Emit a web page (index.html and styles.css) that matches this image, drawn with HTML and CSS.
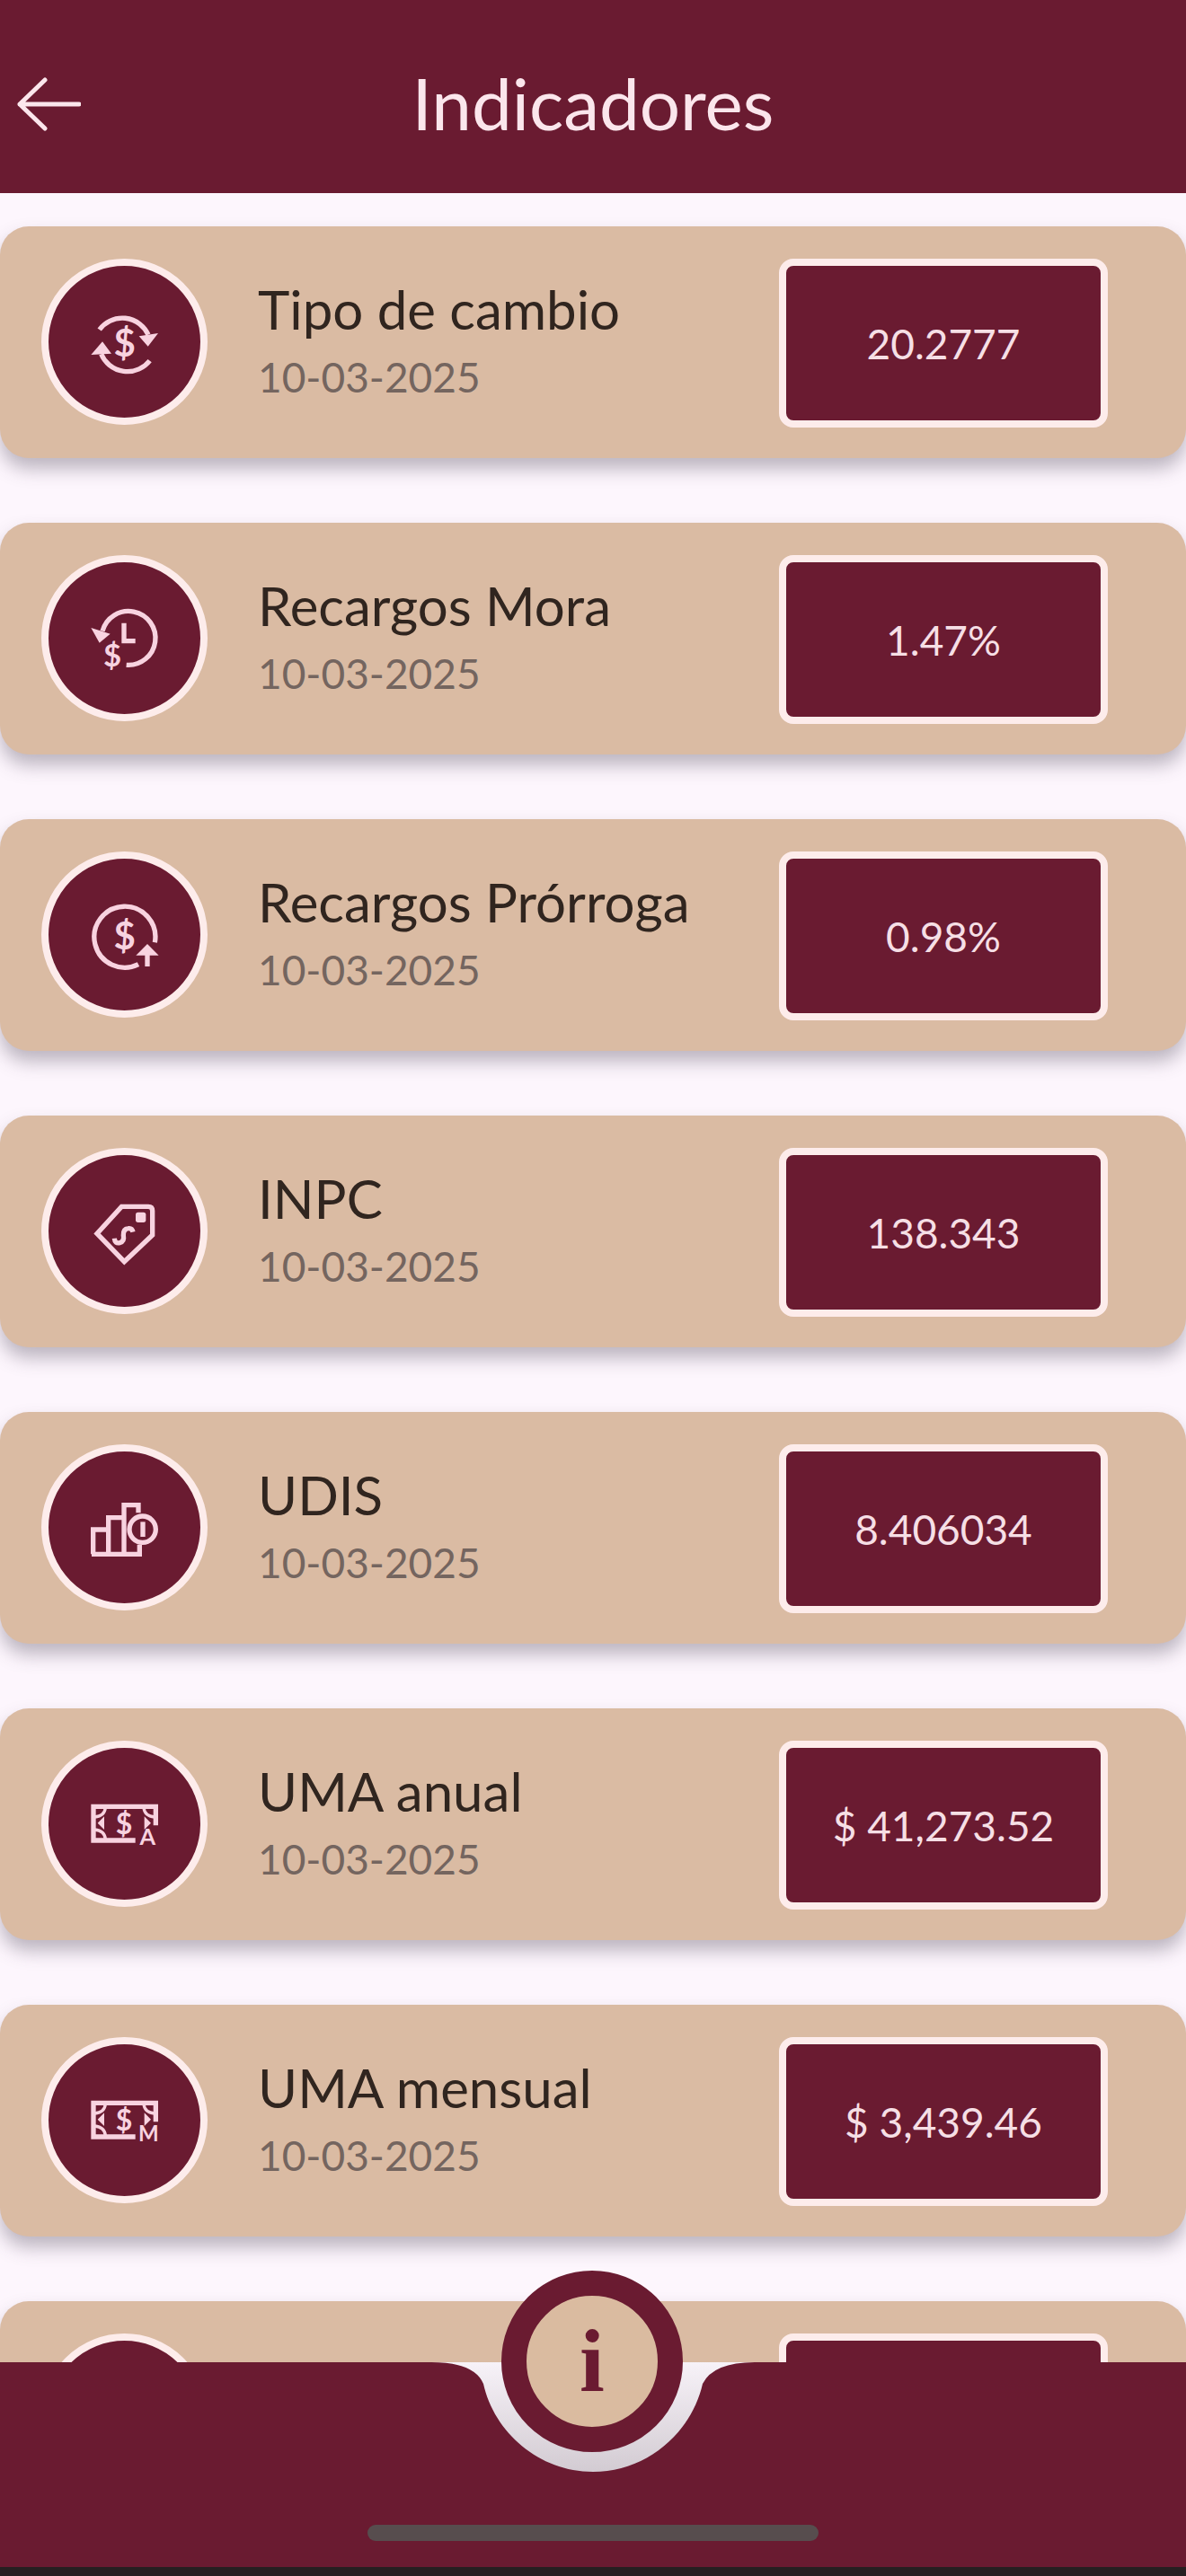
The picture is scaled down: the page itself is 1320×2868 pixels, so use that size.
FILE: index.html
```
<!DOCTYPE html>
<html lang="es">
<head>
    <meta charset="UTF-8">
    <meta name="viewport" content="width=device-width, initial-scale=1.0">
    <title>Indicadores</title>
    <link rel="stylesheet" href="styles.css">
</head>
<body>
    <header class="header">
        <button class="back" type="button" aria-label="Regresar">
            <svg viewBox="0 0 72 60"><path d="M70 30H4M32 3L4 30L32 57"/></svg>
        </button>
        <h1 class="title">Indicadores</h1>
    </header>

    <main class="content">
        <ul class="list">
            <li class="card">
                <div class="icon">
                    <svg viewBox="177 180 240 240">
                        <path d="M212 258A95 95 0 0 1 375 275M380 362A95 95 0 0 1 218 340"/>
                        <path class="solid" d="M344 280L408 270L374 314ZM184 342L222 298L252 338Z"/>
                        <text class="bold" x="296" y="348" font-size="126">$</text>
                    </svg>
                </div>
                <div class="info">
                    <h2 class="name">Tipo de cambio</h2>
                    <p class="date">10-03-2025</p>
                </div>
                <div class="value">20.2777</div>
            </li>
            <li class="card">
                <div class="icon">
                    <svg viewBox="177 180 240 240">
                        <path d="M222 275A90 90 0 1 1 302 388M294 248V308H332"/>
                        <path class="solid" d="M184 264L248 284L212 314Z"/>
                        <text class="bold" x="255" y="394" font-size="104">$</text>
                    </svg>
                </div>
                <div class="info">
                    <h2 class="name">Recargos Mora</h2>
                    <p class="date">10-03-2025</p>
                </div>
                <div class="value">1.47%</div>
            </li>
            <li class="card">
                <div class="icon">
                    <svg viewBox="177 180 240 240">
                        <path d="M397 325A102 102 0 1 0 342 398M372 405V350"/>
                        <path class="solid" d="M334 368L372 330L410 368Z"/>
                        <text class="bold" x="296" y="348" font-size="126">$</text>
                    </svg>
                </div>
                <div class="info">
                    <h2 class="name">Recargos Prórroga</h2>
                    <p class="date">10-03-2025</p>
                </div>
                <div class="value">0.98%</div>
            </li>
            <li class="card">
                <div class="icon">
                    <svg viewBox="177 180 240 240">
                        <path d="M286 217H375Q389 217 389 231V312L295 401L204 307Z"/>
                        <rect class="solid" x="333" y="236" width="34" height="34" rx="8"/>
                        <path d="M262 323Q264 342 280 338Q296 334 292 313Q291 292 308 290Q321 288 324 302"/>
                    </svg>
                </div>
                <div class="info">
                    <h2 class="name">INPC</h2>
                    <p class="date">10-03-2025</p>
                </div>
                <div class="value">138.343</div>
            </li>
            <li class="card">
                <div class="icon">
                    <svg viewBox="177 180 240 240">
                        <path d="M191 388V306H242V388M242 306V266H294V388M294 266V224H342V250M186 388H346V356"/>
                        <circle cx="356" cy="305" r="44"/>
                        <path d="M357 280V330"/>
                    </svg>
                </div>
                <div class="info">
                    <h2 class="name">UDIS</h2>
                    <p class="date">10-03-2025</p>
                </div>
                <div class="value">8.406034</div>
            </li>
            <li class="card">
                <div class="icon">
                    <svg viewBox="177 180 240 240">
                        <path d="M332 354H192V241H400V304"/>
                        <path class="thin" d="M232 244Q230 272 196 276M196 318Q230 322 232 350M360 244Q362 272 396 276"/>
                        <path class="solid" d="M206 296L228 274V318ZM384 296L362 274V318Z"/>
                        <text class="bold" x="294" y="332" font-size="96">$</text>
                        <text class="bold" x="373" y="368" font-size="76">A</text>
                    </svg>
                </div>
                <div class="info">
                    <h2 class="name">UMA anual</h2>
                    <p class="date">10-03-2025</p>
                </div>
                <div class="value">$ 41,273.52</div>
            </li>
            <li class="card">
                <div class="icon">
                    <svg viewBox="177 180 240 240">
                        <path d="M332 354H192V241H400V304"/>
                        <path class="thin" d="M232 244Q230 272 196 276M196 318Q230 322 232 350M360 244Q362 272 396 276"/>
                        <path class="solid" d="M206 296L228 274V318ZM384 296L362 274V318Z"/>
                        <text class="bold" x="294" y="332" font-size="96">$</text>
                        <text class="bold" x="376" y="368" font-size="72">M</text>
                    </svg>
                </div>
                <div class="info">
                    <h2 class="name">UMA mensual</h2>
                    <p class="date">10-03-2025</p>
                </div>
                <div class="value">$ 3,439.46</div>
            </li>
            <li class="card">
                <div class="icon"></div>
                <div class="info"></div>
                <div class="value"></div>
            </li>
        </ul>
    </main>

    <nav class="navbar">
        <div class="side"></div>
        <!-- notch around the info button -->
        <svg class="notch" viewBox="0 0 360 228">
            <path d="M0 0Q48 0 58 24C70 78 120 122 180 122C240 122 290 78 302 24Q314 0 360 0V228H0Z"/>
        </svg>
        <div class="side"></div>
        <button class="fab" type="button" aria-label="Información">i</button>
        <div class="home"></div>
    </nav>
</body>
</html>
```
FILE: styles.css
```
* {
    box-sizing: border-box;
}
body {
    margin: 0;
    height: 100vh;
    display: flex;
    flex-direction: column;
    background-color: #fdf6fd;
    font-family: Lato, sans-serif;
}
h1, h2, p, ul {
    margin: 0;
    padding: 0;
    font-weight: 400;
}
button {
    border: none;
    padding: 0;
    cursor: pointer;
}

.header {
    display: grid;
    grid-template-columns: 72px 1fr 72px;
    align-items: center;
    padding: 64px 18px 47px;
    background-color: #6a1b31;
    color: #fbe6ec;
}
.back {
    background: none;
    height: 60px;
}
.back svg {
    display: block;
    width: 72px;
    height: 60px;
    fill: none;
    stroke: #fbe6ec;
    stroke-width: 5;
    stroke-linecap: round;
    stroke-linejoin: round;
}
.title {
    padding-bottom: 4px;
    font-size: 80px;
    line-height: 100px;
    text-align: center;
}

.content {
    flex: 1;
    min-height: 0;
    overflow: hidden;
    padding-top: 37px;
}
.list {
    display: flex;
    flex-direction: column;
    gap: 72px;
    list-style: none;
}
.card {
    display: grid;
    grid-template-columns: 185px 1fr 366px;
    column-gap: 56px;
    height: 258px;
    padding: 36px 87px 0 46px;
    border-radius: 32px;
    background-color: #dabba3;
    box-shadow: 0 12px 20px rgba(70, 60, 80, 0.35);
}
.icon {
    display: flex;
    justify-content: center;
    align-items: center;
    height: 185px;
    border: 8px solid #fdeceb;
    border-radius: 50%;
    background-color: #6a1b31;
}
.icon svg {
    width: 80px;
    height: 80px;
    fill: none;
    stroke: #f8d3e0;
    stroke-width: 16;
}
.icon .thin {
    stroke-width: 10;
}
.icon .solid,
.icon text {
    fill: #f8d3e0;
    stroke: none;
}
.icon text {
    text-anchor: middle;
}
.icon .bold {
    font-weight: 700;
}
.info {
    padding-top: 18px;
    white-space: nowrap;
}
.name {
    color: #30251f;
    font-size: 60px;
    line-height: 76px;
}
.date {
    color: #74655f;
    font-size: 46px;
    line-height: 76px;
}
.value {
    display: flex;
    justify-content: center;
    align-items: center;
    height: 188px;
    border: 8px solid #fdeceb;
    border-radius: 16px;
    background-color: #6a1b31;
    color: #f6dfe5;
    font-size: 46px;
}

.navbar {
    position: relative;
    display: grid;
    grid-template-columns: 1fr 360px 1fr;
    border-bottom: 10px solid #261f21;
}
.side {
    background-color: #6a1b31;
}
.notch {
    display: block;
    width: 360px;
    height: 228px;
    fill: #6a1b31;
    background: linear-gradient(#f7f2f8, #d3ccd3 120px);
}
.fab {
    position: absolute;
    top: -102px;
    left: 50%;
    width: 202px;
    height: 202px;
    margin-left: -102px;
    border: 28px solid #6a1b31;
    border-radius: 50%;
    background-color: #dabba0;
    color: #6a1b31;
    font-family: "Liberation Serif", serif;
    font-size: 100px;
    font-weight: 700;
    line-height: 140px;
}
.home {
    position: absolute;
    bottom: 29px;
    left: 31%;
    right: 31%;
    height: 18px;
    border-radius: 9px;
    background-color: #574d4e;
}
```
